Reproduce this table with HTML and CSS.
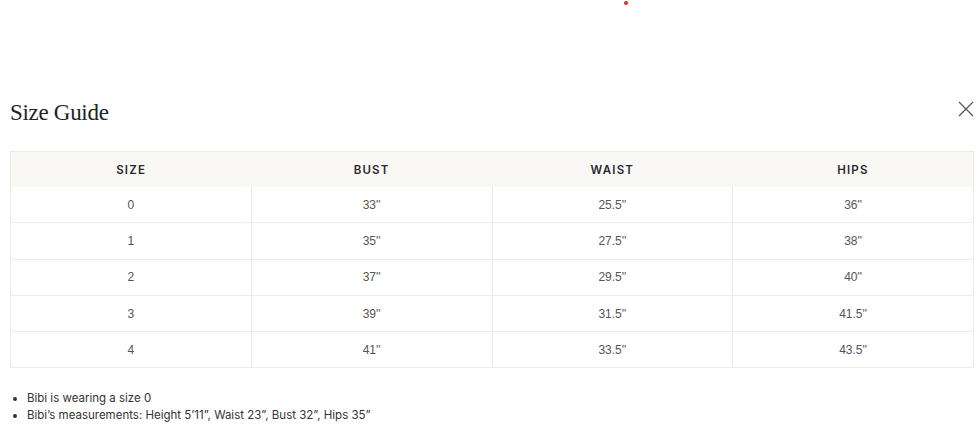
FILE: index.html
```html
<!DOCTYPE html>
<html lang="en">
<head>
<meta charset="utf-8">
<title>Size Guide</title>
<link rel="stylesheet" href="styles.css">
</head>
<body>
<div class="top-dot"></div>
<section class="modal">
  <header class="modal-head">
    <h2 class="title">Size Guide</h2>
    <button class="close" aria-label="Close">
      <svg width="16" height="16" viewBox="0 0 16 16"><path d="M1 1L15 15M15 1L1 15" stroke="#555" stroke-width="1.2" fill="none"/></svg>
    </button>
  </header>
  <table class="sizes">
    <thead>
      <tr><th>SIZE</th><th>BUST</th><th>WAIST</th><th>HIPS</th></tr>
    </thead>
    <tbody>
      <tr><td>0</td><td>33''</td><td>25.5''</td><td>36''</td></tr>
      <tr><td>1</td><td>35''</td><td>27.5''</td><td>38''</td></tr>
      <tr><td>2</td><td>37''</td><td>29.5''</td><td>40''</td></tr>
      <tr><td>3</td><td>39''</td><td>31.5''</td><td>41.5''</td></tr>
      <tr><td>4</td><td>41''</td><td>33.5''</td><td>43.5''</td></tr>
    </tbody>
  </table>
  <ul class="notes">
    <li>Bibi is wearing a size 0</li>
    <li>Bibi’s measurements: Height 5’11”, Waist 23”, Bust 32”, Hips 35”</li>
  </ul>
</section>
</body>
</html>
```
FILE: styles.css
```css
html, body { margin: 0; padding: 0; background: #fff; }
body { font-family: "Liberation Sans", Arial, sans-serif; color: #333; }
.top-dot {
  position: absolute; left: 624px; top: 1px;
  width: 4px; height: 4px; border-radius: 50%; background: #e8262b;
}
.modal { padding: 96px 6px 0 10px; }
.modal-head { display: flex; justify-content: space-between; align-items: flex-start; }
.title {
  margin: 0; font-family: "Liberation Serif", "Times New Roman", serif;
  font-weight: normal; font-size: 23px; line-height: 34px; color: #222; letter-spacing: -0.3px;
}
.close { border: 0; background: none; padding: 0; margin: 5px 0 0 0; width: 16px; height: 16px; }
.close svg { display: block; }
.sizes {
  width: 964px; margin-top: 21px; border-collapse: collapse; table-layout: fixed;
  border: 1px solid #efebe0;
}
.sizes th {
  height: 35px; background: #f9f8f4; font-family: "Inter", "Liberation Sans", sans-serif;
  font-weight: 600; font-size: 11.5px; letter-spacing: 1.2px; color: #2a2a33; padding: 0;
}
.sizes td {
  height: 35.3px; text-align: center; font-size: 12px; color: #555; padding: 0;
  border: 1px solid #efebe0;
}
.sizes tbody tr:first-child td { border-top: 0; }
.notes {
  margin: 22px 0 0 0; padding-left: 17px; font-family: "Inter", "Liberation Sans", sans-serif;
  font-size: 11.5px; line-height: 17px; color: #333;
}
.notes li { padding-left: 0; }
```
